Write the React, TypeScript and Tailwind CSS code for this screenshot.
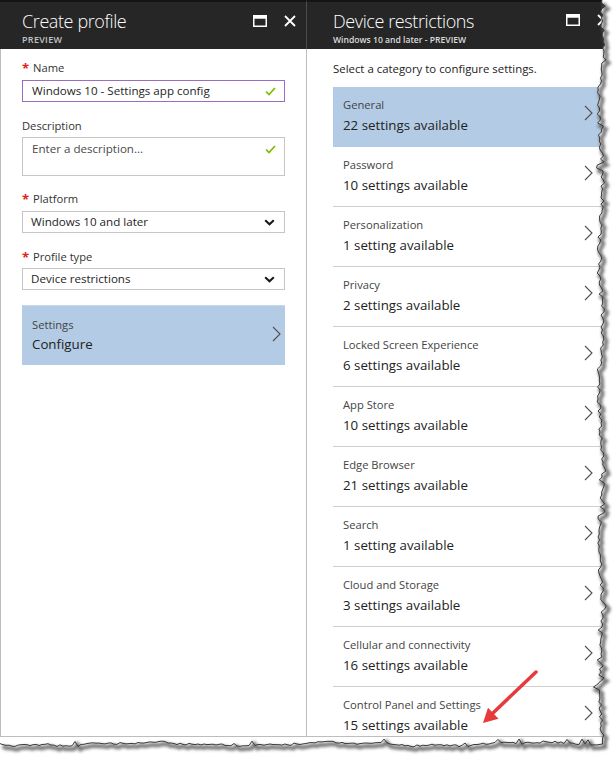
import React from "react";

function makeRand(seed: number) {
  let s = seed;
  return () => {
    s = (s * 16807) % 2147483647;
    return s / 2147483647;
  };
}

function TornEdge() {
  const rand = makeRand(987654);
  const right: [number, number][] = [];
  for (let y = 0; y <= 744; y += 3) {
    let x = 601 + Math.sin(y / 23) * 2 + (rand() - 0.5) * 4;
    if (rand() > 0.88) x += (rand() - 0.5) * 10;
    right.push([x, y]);
  }
  const bottom: [number, number][] = [];
  for (let x = 600; x >= 0; x -= 3) {
    let y = 744 + Math.sin(x / 31) * 1.6 + Math.sin(x / 9) * 0.8 + (rand() - 0.5) * 2;
    if (rand() > 0.93) y -= rand() * 5;
    bottom.push([x, y]);
  }
  const edge = [...right, ...bottom];
  const edgeStr = edge.map((p) => `${p[0].toFixed(1)},${p[1].toFixed(1)}`).join(" ");
  const outside = `M616,0 L${edgeStr.split(" ").join(" L")} L0,760 L616,760 Z`;
  const shadowStr = edge.map((p) => `${(p[0] + 2.5).toFixed(1)},${(p[1] + 3).toFixed(1)}`).join(" ");
  return (
    <svg className="absolute inset-0 pointer-events-none" width="616" height="760" viewBox="0 0 616 760">
      <defs>
        <filter id="blur" x="-10%" y="-10%" width="120%" height="120%">
          <feGaussianBlur stdDeviation="1.6" />
        </filter>
      </defs>
      <path d={outside} fill="#ffffff" />
      <polyline points={shadowStr} fill="none" stroke="#555" strokeWidth="4" opacity="0.8" filter="url(#blur)" />
      <polyline points={edgeStr} fill="none" stroke="#3a3a3a" strokeWidth="1" />
    </svg>
  );
}

function Arrow() {
  return (
    <svg className="absolute inset-0 pointer-events-none" width="616" height="760" viewBox="0 0 616 760">
      <line x1="536" y1="672" x2="493" y2="713" stroke="#e63a3d" strokeWidth="3.5" strokeLinecap="round" />
      <polygon points="483,723 498.5,718.8 488,707.8" fill="#e63a3d" />
    </svg>
  );
}

function MaxIcon() {
  return (
    <svg width="14" height="12" viewBox="0 0 14 12">
      <rect x="0.75" y="0.75" width="12.5" height="10.5" fill="none" stroke="#fff" strokeWidth="1.5" />
      <rect x="0.75" y="0.75" width="12.5" height="3" fill="#fff" />
    </svg>
  );
}

function CloseIcon() {
  return (
    <svg width="12" height="12" viewBox="0 0 12 12">
      <path d="M1 1 L11 11 M11 1 L1 11" stroke="#fff" strokeWidth="1.8" />
    </svg>
  );
}

function Check() {
  return (
    <svg width="11" height="9" viewBox="0 0 11 9">
      <polyline points="1,4.5 4,7.5 10,1" fill="none" stroke="#7fba00" strokeWidth="1.7" />
    </svg>
  );
}

function DownChevron() {
  return (
    <svg width="11" height="7" viewBox="0 0 11 7">
      <polyline points="1.2,1.2 5.5,5.3 9.8,1.2" fill="none" stroke="#1a1a1a" strokeWidth="2.1" />
    </svg>
  );
}

function RightChevron() {
  return (
    <svg width="9" height="16" viewBox="0 0 9 16">
      <polyline points="1,1 8,8 1,15" fill="none" stroke="#505050" strokeWidth="1.1" />
    </svg>
  );
}

function Label({ text, required }: { text: string; required?: boolean }) {
  return (
    <div className="h-[16px] text-[11.2px] leading-[16px] text-[#333] flex items-center">
      {required && <span className="text-[#e0221b] w-[11px] text-[13px] font-bold leading-[16px]">*</span>}
      <span>{text}</span>
    </div>
  );
}

const items = [
  ["General", "22 settings available"],
  ["Password", "10 settings available"],
  ["Personalization", "1 setting available"],
  ["Privacy", "2 settings available"],
  ["Locked Screen Experience", "6 settings available"],
  ["App Store", "10 settings available"],
  ["Edge Browser", "21 settings available"],
  ["Search", "1 setting available"],
  ["Cloud and Storage", "3 settings available"],
  ["Cellular and connectivity", "16 settings available"],
  ["Control Panel and Settings", "15 settings available"],
];

export default function App() {
  return (
    <div className="relative w-[616px] h-[760px] overflow-hidden bg-white font-['Open_Sans',sans-serif]">
      <div className="flex h-[737px] border-b border-[#bdbdbd] overflow-hidden">
        {/* Left panel */}
        <div className="w-[307px] shrink-0 flex flex-col">
          <div className="h-[49px] shrink-0 bg-[#262626] border-t-[2px] border-[#141414] border-r border-r-[#4c4c4c] flex items-start pl-[22px] pr-[10px]">
            <div className="flex-1 pt-[7px]">
              <div className="text-[18px] leading-[24px] font-light text-white tracking-[-0.4px]">Create profile</div>
              <div className="text-[9px] leading-[12px] font-semibold text-[#c2c2c2] tracking-[0.3px] mt-[1px]">PREVIEW</div>
            </div>
            <div className="flex items-center gap-[17px] pt-[13px]">
              <MaxIcon />
              <CloseIcon />
            </div>
          </div>
          <div className="flex-1 border-l border-r border-[#bdbdbd] px-[21px] pt-[11px]">
            <Label text="Name" required />
            <div className="mt-[4px] h-[22px] border border-[#9a6cc4] flex items-center pl-[9px] pr-[8px]">
              <span className="flex-1 text-[11.6px] text-[#1e1e1e]">Windows 10 - Settings app config</span>
              <Check />
            </div>
            <div className="mt-[16px]">
              <Label text="Description" />
            </div>
            <div className="mt-[3px] h-[39px] border border-[#c6c6c6] flex items-start pt-[3px] pl-[9px] pr-[8px]">
              <span className="flex-1 text-[11.6px] leading-[16px] text-[#4a4a4a]">Enter a description...</span>
              <div className="pt-[4px]">
                <Check />
              </div>
            </div>
            <div className="mt-[15px]">
              <Label text="Platform" required />
            </div>
            <div className="mt-[4px] h-[22px] border border-[#c6c6c6] flex items-center pl-[8px] pr-[9px]">
              <span className="flex-1 text-[11.6px] text-[#1e1e1e]">Windows 10 and later</span>
              <DownChevron />
            </div>
            <div className="mt-[16px]">
              <Label text="Profile type" required />
            </div>
            <div className="mt-[3px] h-[22px] border border-[#c6c6c6] flex items-center pl-[8px] pr-[9px]">
              <span className="flex-1 text-[11.6px] text-[#1e1e1e]">Device restrictions</span>
              <DownChevron />
            </div>
            <div className="mt-[15px] h-[60px] bg-[#b3cbe4] border-t border-[#c9d8e8] flex items-start pl-[10px] pr-[4px]">
              <div className="flex-1 pt-[11px]">
                <div className="text-[11.2px] leading-[16px] text-[#444]">Settings</div>
                <div className="text-[13.3px] leading-[20px] text-[#222] mt-[1px]">Configure</div>
              </div>
              <div className="pt-[20px]">
                <RightChevron />
              </div>
            </div>
          </div>
        </div>
        {/* Right panel */}
        <div className="flex-1 flex flex-col">
          <div className="h-[49px] shrink-0 bg-[#262626] border-t-[2px] border-[#141414] flex items-start pl-[26px]">
            <div className="w-[233px] pt-[7px]">
              <div className="text-[18px] leading-[24px] font-light text-white tracking-[-0.4px]">Device restrictions</div>
              <div className="text-[8.6px] leading-[12px] font-semibold text-[#dcdcdc] mt-[1px]">Windows 10 and later - PREVIEW</div>
            </div>
            <div className="pt-[12px] flex items-center gap-[17px]">
              <MaxIcon />
              <CloseIcon />
            </div>
          </div>
          <div className="flex-1 pl-[26px] pt-[12px]">
            <div className="text-[11.4px] leading-[16px] text-[#222]">Select a category to configure settings.</div>
            <div className="mt-[10px] w-[276px]">
              {items.map(([label, count], i) => (
                <div
                  key={label}
                  className={
                    i === 0
                      ? "h-[60px] bg-[#b3cbe4] border-b border-[#b3cbe4] flex items-start pl-[10px] pr-[16px]"
                      : "h-[60px] bg-white border-b border-[#cfcfcf] flex items-start pl-[10px] pr-[16px]"
                  }
                >
                  <div className="flex-1 pt-[10px]">
                    <div className="text-[11.2px] leading-[16px] text-[#444]">{label}</div>
                    <div className="text-[13.3px] leading-[20px] text-[#222] mt-[2px]">{count}</div>
                  </div>
                  <div className="pt-[18px]">
                    <RightChevron />
                  </div>
                </div>
              ))}
            </div>
          </div>
        </div>
      </div>
      <Arrow />
      <TornEdge />
    </div>
  );
}
